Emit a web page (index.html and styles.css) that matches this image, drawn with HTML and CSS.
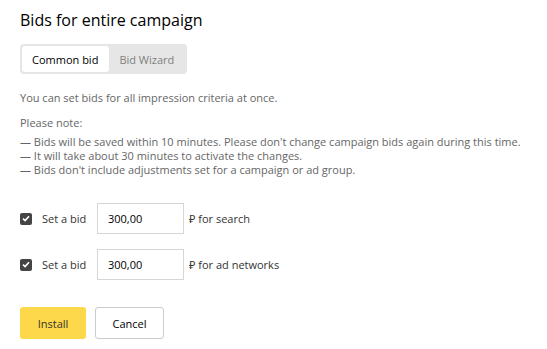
FILE: index.html
```html
<!DOCTYPE html>
<html lang="en">
<head>
  <meta charset="UTF-8" />
  <title>Bids for entire campaign</title>
  <link rel="stylesheet" href="styles.css">
</head>
<body>
  <div class="dialog">
    <h1 class="title">Bids for entire campaign</h1>

    <!-- Mode switch -->
    <div class="tabs">
      <button class="tab active">Common bid</button>
      <button class="tab">Bid Wizard</button>
    </div>

    <p class="lead">You can set bids for all impression criteria at once.</p>

    <div class="note">
      <p class="note-head">Please note:</p>
      <p>— Bids will be saved within 10 minutes. Please don't change campaign bids again during this time.</p>
      <p>— It will take about 30 minutes to activate the changes.</p>
      <p>— Bids don't include adjustments set for a campaign or ad group.</p>
    </div>

    <!-- Bid rows -->
    <div class="bid-row">
      <label class="check">
        <span class="box"><svg width="8" height="7" viewBox="0 0 8 7"><path d="M1 3.6 L3.1 5.6 L7 1.2" fill="none" stroke="#fff" stroke-width="1.6"/></svg></span>
        Set a bid
      </label>
      <div class="input">300,00</div>
      <span class="unit">₽ for search</span>
    </div>
    <div class="bid-row">
      <label class="check">
        <span class="box"><svg width="8" height="7" viewBox="0 0 8 7"><path d="M1 3.6 L3.1 5.6 L7 1.2" fill="none" stroke="#fff" stroke-width="1.6"/></svg></span>
        Set a bid
      </label>
      <div class="input">300,00</div>
      <span class="unit">₽ for ad networks</span>
    </div>

    <div class="actions">
      <button class="btn btn-primary">Install</button>
      <button class="btn btn-plain">Cancel</button>
    </div>
  </div>
</body>
</html>
```

FILE: styles.css
```css
/* BASE */
* { box-sizing: border-box; margin: 0; padding: 0; }
body {
  background: #fff;
  font-family: 'Open Sans', 'Noto Sans', sans-serif;
  color: #000;
}

.dialog { padding: 9px 20px 0; }

.title {
  font-size: 16px;
  font-weight: 500;
  color: #000;
  line-height: 22px;
}

/* TABS */
.tabs {
  display: inline-flex;
  margin-top: 13px;
  padding: 2px;
  background: #e6e6e6;
  border-radius: 4px;
}
.tab {
  height: 26px;
  padding: 0 11px 0 10px;
  border: none;
  background: transparent;
  font-family: inherit;
  font-size: 11px;
  color: #808080;
  border-radius: 3px;
}
.tab.active { background: #fff; color: #000; }

/* TEXT */
.lead {
  margin-top: 17px;
  font-size: 11px;
  line-height: 14px;
  color: #666;
}
.note {
  margin-top: 11px;
  font-size: 11px;
  line-height: 14px;
  color: #666;
}
.note-head { margin-bottom: 5px; }

/* BID ROWS */
.bid-row {
  display: flex;
  align-items: center;
  margin-top: 26px;
  height: 31px;
  font-size: 11px;
  color: #333;
}
.bid-row + .bid-row { margin-top: 15px; }
.check {
  display: flex;
  align-items: center;
  width: 77px;
}
.box {
  display: flex;
  align-items: center;
  justify-content: center;
  width: 12px;
  height: 12px;
  margin-right: 10px;
  background: #444;
  border-radius: 2px;
}
.input {
  width: 87px;
  height: 31px;
  padding: 0 10px;
  line-height: 29px;
  border: 1px solid #d6d6d6;
  color: #000;
}
.unit { margin-left: 5px; }

/* ACTIONS */
.actions {
  display: flex;
  gap: 9px;
  margin-top: 27px;
}
.btn {
  height: 32px;
  font-family: inherit;
  font-size: 11px;
  border-radius: 3px;
}
.btn-primary {
  width: 66px;
  background: #fdd84a;
  border: none;
  color: #333;
}
.btn-plain {
  width: 69px;
  background: #fff;
  border: 1px solid #ccc;
  color: #000;
}
```
